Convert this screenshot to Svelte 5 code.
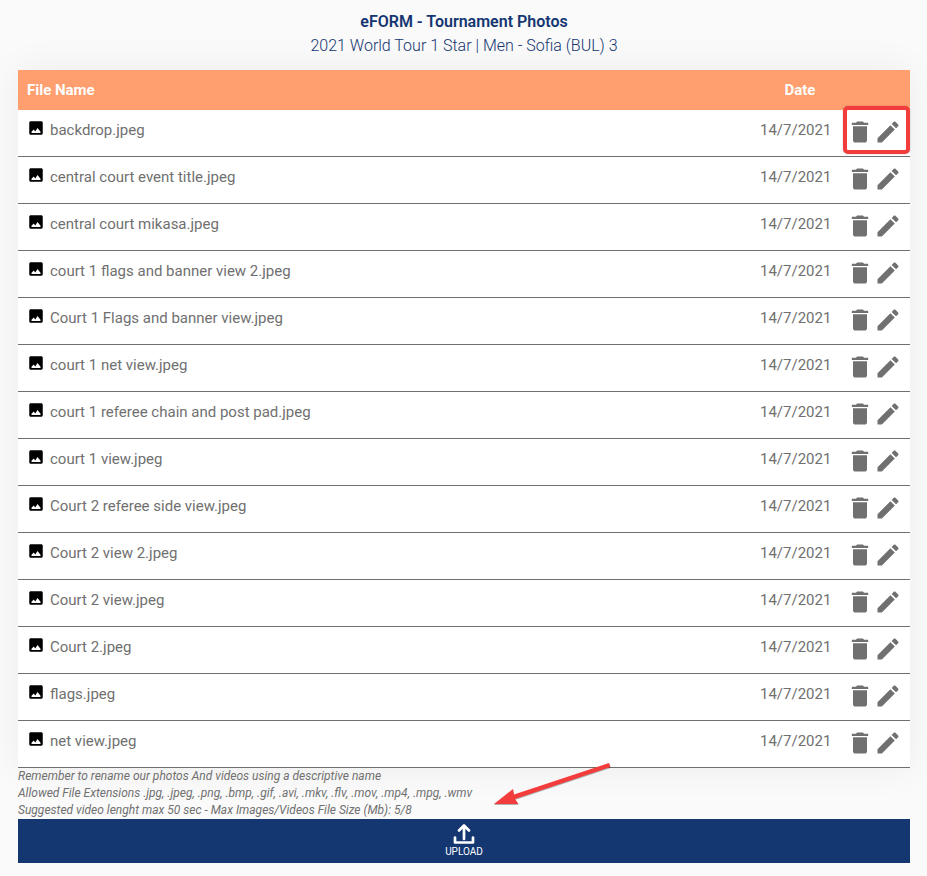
<script lang="ts">
	interface FileRow {
		name: string;
		date: string;
	}

	const names = [
		'backdrop.jpeg',
		'central court event title.jpeg',
		'central court mikasa.jpeg',
		'court 1 flags and banner view 2.jpeg',
		'Court 1 Flags and banner view.jpeg',
		'court 1 net view.jpeg',
		'court 1 referee chain and post pad.jpeg',
		'court 1 view.jpeg',
		'Court 2 referee side view.jpeg',
		'Court 2 view 2.jpeg',
		'Court 2 view.jpeg',
		'Court 2.jpeg',
		'flags.jpeg',
		'net view.jpeg'
	];

	let files: FileRow[] = $state(names.map((name) => ({ name, date: '14/7/2021' })));

	function removeFile(file: FileRow) {
		files = files.filter((f) => f !== file);
	}

	function renameFile(file: FileRow) {
		const name = prompt('File Name', file.name);
		if (name) file.name = name;
	}
</script>

<main class="page">
	<header class="heading">
		<h1>eFORM - Tournament Photos</h1>
		<p>2021 World Tour 1 Star | Men - Sofia (BUL) 3</p>
	</header>

	<table class="files">
		<thead>
			<tr>
				<th class="name" scope="col">File Name</th>
				<th class="date" scope="col">Date</th>
				<td class="actions"></td>
			</tr>
		</thead>
		<tbody>
			{#each files as file, i}
				<tr>
					<td class="name">
						<div class="file">
							<svg width="18" height="18" viewBox="0 0 24 24" aria-hidden="true">
								<path d="M21 19V5c0-1.1-.9-2-2-2H5c-1.1 0-2 .9-2 2v14c0 1.1.9 2 2 2h14c1.1 0 2-.9 2-2zM6 18.500v-1.500l3-3 2 2.500 3-4.500 4 5v1.500z" />
							</svg>
							<span>{file.name}</span>
						</div>
					</td>
					<td class="date">{file.date}</td>
					<td class="actions">
						<div class="buttons">
							<button aria-label="Delete {file.name}" onclick={() => removeFile(file)}>
								<svg width="28" height="28" viewBox="0 0 24 24">
									<path d="M6 19c0 1.1.9 2 2 2h8c1.1 0 2-.9 2-2V7H6v12zM19 4h-3.5l-1-1h-5l-1 1H5v2h14V4z" />
								</svg>
							</button>
							<button aria-label="Rename {file.name}" onclick={() => renameFile(file)}>
								<svg width="28" height="28" viewBox="0 0 24 24">
									<path d="M3 17.25V21h3.75L17.81 9.94l-3.75-3.75L3 17.25zM20.71 7.04c.39-.39.39-1.02 0-1.41l-2.34-2.34c-.39-.39-1.02-.39-1.41 0l-1.83 1.83 3.75 3.75 1.83-1.83z" />
								</svg>
							</button>
							{#if i === 0}
								<span class="highlight"></span>
							{/if}
						</div>
					</td>
				</tr>
			{/each}
		</tbody>
	</table>

	<section class="notes">
		<p>Remember to rename our photos And videos using a descriptive name</p>
		<p>Allowed File Extensions .jpg, .jpeg, .png, .bmp, .gif, .avi, .mkv, .flv, .mov, .mp4, .mpg, .wmv</p>
		<p>Suggested video lenght max 50 sec - Max Images/Videos File Size (Mb): 5/8</p>

		<!-- Arrow pointing at the upload bar -->
		<svg class="arrow" width="120" height="46" viewBox="0 0 120 46" aria-hidden="true">
			<path d="M2 42L21 27l1 5.5L117 1l1.500 4L23 37l3.500 5z" />
		</svg>
	</section>

	<button class="upload">
		<svg width="24" height="24" viewBox="0 0 24 24" aria-hidden="true">
			<path d="M12 17V3.5M7 8.5l5-5 5 5M3 15.5v5h18v-5" />
		</svg>
		<span>UPLOAD</span>
	</button>
</main>

<style>
	:global(body) {
		margin: 0;
		background: #fafafa;
		color: #707070;
		font-family: Roboto, 'Liberation Sans', sans-serif;
	}

	.page {
		padding: 10px 17px 15px 18px;
	}

	.heading {
		margin-bottom: 12px;
		color: #143671;
		font-size: 16px;
		font-weight: 300;
		line-height: 24px;
		text-align: center;
	}

	h1 {
		margin: 0;
		font-size: 16px;
		font-weight: 600;
	}

	p {
		margin: 0;
	}

	/* File table */
	.files {
		width: 100%;
		border-spacing: 0;
		table-layout: fixed;
		background: #ffffff;
		box-shadow: 0 0 36px rgba(0, 0, 0, 0.06);
		font-size: 15px;
		line-height: 24px;
	}

	thead th,
	thead td {
		height: 40px;
		padding: 0;
		background: #ff9e6e;
		color: #ffffff;
		font-weight: 700;
	}

	.files .name {
		padding-left: 9px;
		text-align: left;
	}

	.date {
		width: 80px;
	}

	.actions {
		width: 70px;
	}

	tbody td {
		padding: 8px 0 10px;
		border-bottom: 1px solid #707070;
		vertical-align: top;
	}

	.file {
		display: flex;
		align-items: flex-start;
		gap: 5px;
	}

	.file svg {
		margin-top: 1px;
		fill: #000000;
	}

	.buttons {
		position: relative;
		display: flex;
		padding-left: 6px;
	}

	.buttons button {
		padding: 0;
		border: none;
		background: none;
		cursor: pointer;
	}

	.buttons svg {
		display: block;
		fill: #707070;
	}

	.highlight {
		position: absolute;
		inset: -12px 0 -8px 3px;
		border: 4px solid #f33d3d;
		border-radius: 5px;
		box-shadow: 0 0 1px rgba(0, 0, 0, 0.6);
		pointer-events: none;
	}

	/* Upload area */
	.notes {
		position: relative;
		font-size: 12px;
		font-style: italic;
		line-height: 17px;
	}

	.arrow {
		position: absolute;
		top: -6px;
		left: 474px;
		fill: #f33d3d;
		filter: drop-shadow(0 1px 0 rgba(0, 0, 0, 0.3));
	}

	.upload {
		display: flex;
		flex-direction: column;
		align-items: center;
		width: 100%;
		padding: 3px 0 5px;
		border: none;
		background: #143671;
		color: #ffffff;
		font-family: inherit;
		font-size: 10px;
		line-height: 12px;
		cursor: pointer;
	}

	.upload svg {
		fill: none;
		stroke: #ffffff;
		stroke-width: 2.7;
		stroke-linecap: round;
		stroke-linejoin: round;
	}
</style>
